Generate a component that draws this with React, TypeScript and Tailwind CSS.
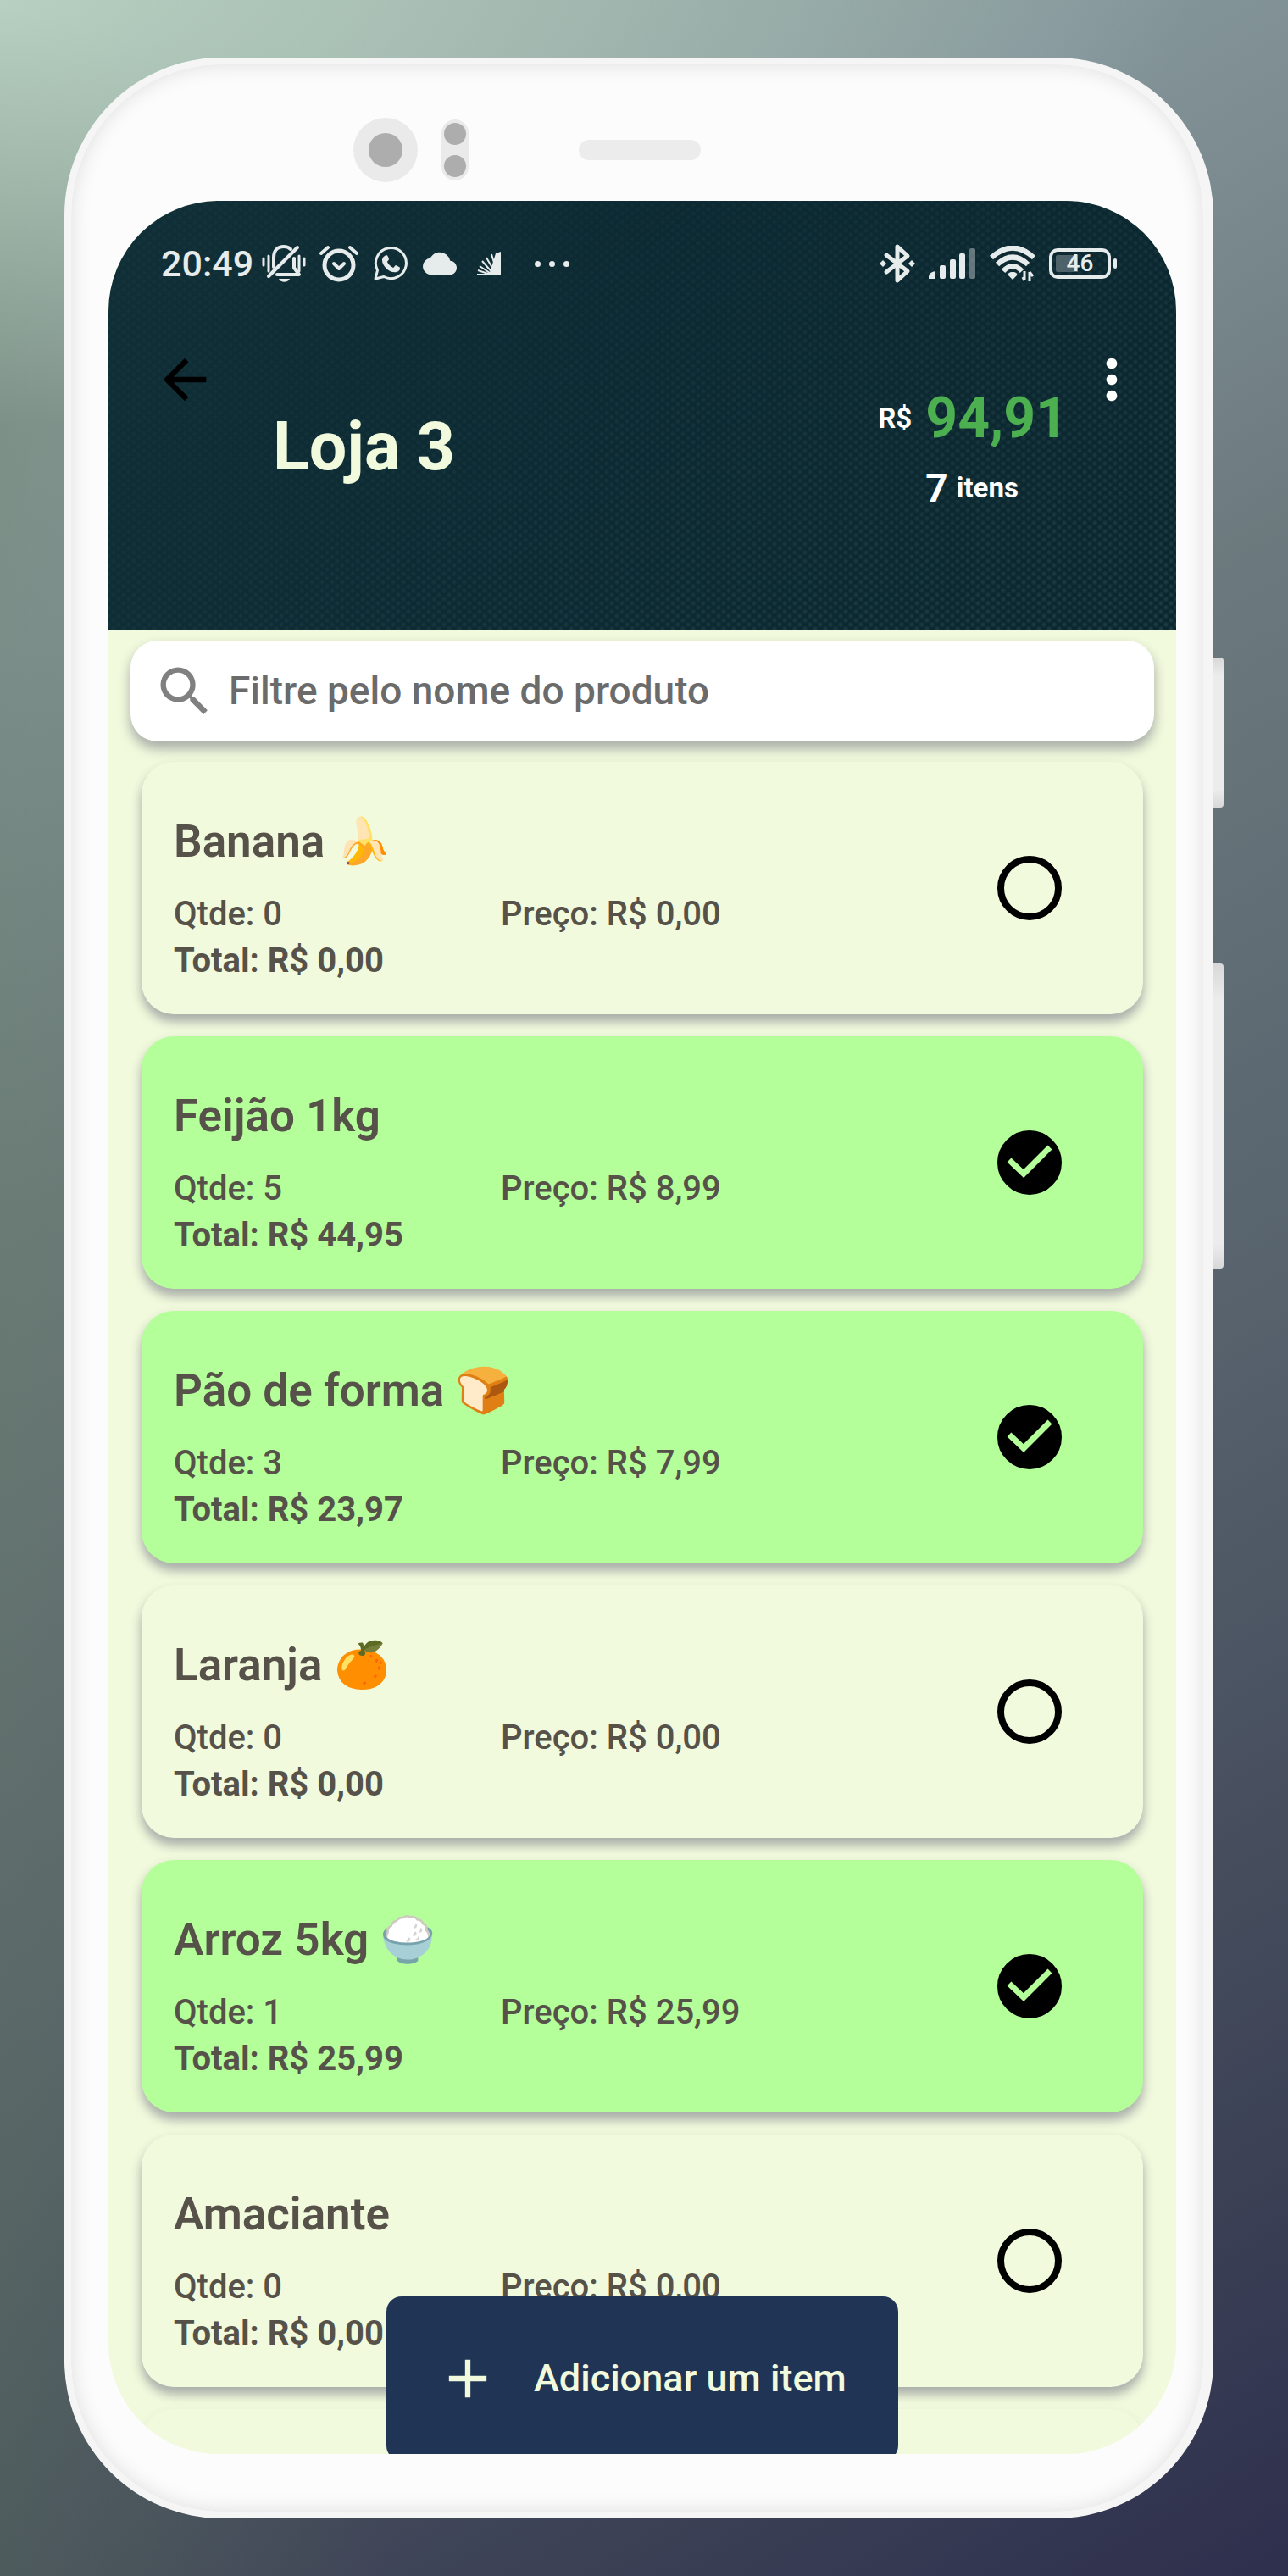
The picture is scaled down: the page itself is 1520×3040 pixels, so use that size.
import React from "react";
import { MdArrowBack, MdMoreVert, MdSearch, MdAdd, MdCloud } from "react-icons/md";

type Item = { name: string; emoji?: string; qty: number; price: string; total: string; done: boolean };

const items: Item[] = [
  { name: "Banana", emoji: "🍌", qty: 0, price: "0,00", total: "0,00", done: false },
  { name: "Feijão 1kg", qty: 5, price: "8,99", total: "44,95", done: true },
  { name: "Pão de forma", emoji: "🍞", qty: 3, price: "7,99", total: "23,97", done: true },
  { name: "Laranja", emoji: "🍊", qty: 0, price: "0,00", total: "0,00", done: false },
  { name: "Arroz 5kg", emoji: "🍚", qty: 1, price: "25,99", total: "25,99", done: true },
  { name: "Amaciante", qty: 0, price: "0,00", total: "0,00", done: false },
];

function BellOff() {
  return (
    <svg viewBox="0 0 52 46" className="w-13 h-[46px]" fill="none" stroke="currentColor" strokeWidth="4" strokeLinecap="round">
      <path d="M2 17v8M8 14v18M44 14v18M50 17v8" strokeWidth="3" />
      <path d="M14 27V16C14 7 19 3 26 3c4 0 6 1 8 3M38 17v11l6 8H18" strokeLinejoin="round" />
      <path d="M42 4L8 38" />
      <path d="M20 41h13c-2 5-11 5-13 0z" fill="currentColor" stroke="none" />
    </svg>
  );
}

function Alarm() {
  return (
    <svg viewBox="0 0 46 44" className="w-[46px] h-11" fill="none" stroke="currentColor" strokeLinecap="round">
      <circle cx="23" cy="24" r="17" strokeWidth="5" />
      <path d="M2 10L10 3M44 10L36 3" strokeWidth="4" />
      <path d="M17 22l6 6 6-6" strokeWidth="4" strokeLinejoin="round" />
    </svg>
  );
}

function Chat() {
  return (
    <svg viewBox="0 0 40 40" className="size-10" fill="none" stroke="currentColor">
      <path d="M2 38l2.500-10A18 18 0 1 1 12 35.500z" strokeWidth="3" strokeLinejoin="round" />
      <path d="M13 11c2-2 3-1 4 1l1 3c0 1-2 2-2 3 1 3 4 5 7 7 1 0 2-3 3-3l4 2c2 1 1 5-3 6-8 2-17-7-17-14 0-2 1-4 3-5z" fill="currentColor" stroke="none" />
    </svg>
  );
}

function Fan() {
  return (
    <svg viewBox="0 0 28 28" className="size-7" fill="none" stroke="currentColor">
      <path d="M28 0v28H14L22 2z" fill="currentColor" stroke="none" />
      <path d="M24 26L17 3M22 26L11 7M20 27L6 11M18 27L3 17M16 27L1 22M14 27H0" strokeWidth="2" />
    </svg>
  );
}

function Bluetooth() {
  return (
    <svg viewBox="0 0 42 48" className="w-[42px] h-12" fill="none" stroke="currentColor">
      <path d="M8 14l25 19-12 11V4l12 11L8 34" strokeWidth="5" strokeLinejoin="round" strokeLinecap="round" />
      <path d="M0 24l4-4 4 4-4 4zM34 24l4-4 4 4-4 4z" fill="currentColor" stroke="none" />
    </svg>
  );
}

function Signal() {
  return (
    <svg viewBox="0 0 56 36" className="w-14 h-9" fill="currentColor">
      <path d="M0 36v-3q1-5 8-6v9z" />
      <rect x="13" y="20" width="7" height="16" rx="2" />
      <rect x="25" y="13" width="7" height="23" rx="2" />
      <rect x="36" y="6" width="7" height="30" rx="2" />
      <rect x="48" y="0" width="7" height="36" rx="2" opacity="0.4" />
    </svg>
  );
}

function Wifi() {
  return (
    <svg viewBox="0 0 54 42" className="w-[54px] h-[42px]" fill="none" stroke="currentColor">
      <path d="M2 14Q27-9 52 14M9 22Q27 5 45 22M16 30Q27 18 38 30" strokeWidth="6" />
      <path d="M27 31c-4 0-6 2-5 4l5 5 5-5c1-2-1-4-5-4z" fill="currentColor" stroke="none" />
      <path d="M41 30v11M39 37l2 4M47 42V31M47 31l4 5" strokeWidth="3" />
    </svg>
  );
}

function Battery() {
  return (
    <div className="flex items-center gap-[3px]">
      <div className="flex h-9 w-[73px] items-center justify-center rounded-[10px] border-4 border-[#e6ebec] bg-[linear-gradient(90deg,#4d6269_46%,transparent_46%)] bg-clip-content p-1 text-[28px] leading-none font-medium">
        46
      </div>
      <span className="h-3 w-1 rounded-full bg-[#e6ebec]" />
    </div>
  );
}

function StatusBar() {
  return (
    <div className="flex items-center pt-12 pr-[70px] pl-[62px] text-[#e6ebec]">
      <span className="text-[43px] leading-13 font-medium">20:49</span>
      <div className="ml-[10px] flex flex-1 items-center">
        <BellOff />
        <span className="ml-4"><Alarm /></span>
        <span className="ml-[18px]"><Chat /></span>
        <MdCloud className="ml-[18px] size-10" />
        <span className="ml-6"><Fan /></span>
        <span className="ml-10 flex gap-[10px]">
          <i className="size-[7px] rounded-full bg-current" />
          <i className="size-[7px] rounded-full bg-current" />
          <i className="size-[7px] rounded-full bg-current" />
        </span>
      </div>
      <div className="flex items-center gap-4">
        <Bluetooth />
        <Signal />
        <Wifi />
        <Battery />
      </div>
    </div>
  );
}

function Header() {
  return (
    <header className="relative shrink-0 bg-[linear-gradient(120deg,#112f37,#0d2a33_45%,#0a252e)] pb-[135px]">
      <div className="absolute inset-0 bg-[radial-gradient(circle,rgba(130,180,180,0.16)_1px,transparent_4px),radial-gradient(circle,rgba(130,180,180,0.16)_1px,transparent_4px)] bg-[length:12px_10px] bg-[position:0_0,6px_5px] [mask-image:linear-gradient(150deg,rgba(0,0,0,0.2)_30%,black)]" />
      <div className="relative">
        <StatusBar />
        <div className="flex items-start pt-[73px] pr-[38px] pl-[52px]">
          <button aria-label="Voltar" className="text-black">
            <MdArrowBack className="size-19" />
          </button>
          <h1 className="mt-[69px] ml-[66px] flex-1 text-[79px] leading-24 font-bold text-[#f1fadd]">Loja 3</h1>
          <div className="mt-11 mr-[14px] grid grid-cols-[auto_auto] items-center gap-x-4 gap-y-[10px] font-bold text-white">
            <span className="text-[33px] leading-10">R$</span>
            <span className="text-[66px] leading-20 text-[#4caf50]">94,91</span>
            <span className="col-start-2 flex items-center gap-[10px] text-[46px] leading-16">
              7 <span className="text-[33px]">itens</span>
            </span>
          </div>
          <button aria-label="Mais opções" className="text-white">
            <MdMoreVert className="size-19" />
          </button>
        </div>
      </div>
    </header>
  );
}

function ItemCard({ item }: { item: Item }) {
  return (
    <li
      className={
        "flex shrink-0 items-center rounded-[38px] pr-24 pl-[38px] shadow-[0_9px_12px_rgba(70,70,100,0.34),0_6px_14px_rgba(70,70,100,0.12)] " +
        (item.done ? "bg-[#b4ff9a]" : "bg-[#f1fadd]")
      }
    >
      <div className="flex-1 pt-[62px] pb-9 text-[40px] leading-[55px] text-[#56524a]">
        <h2 className="mb-[26px] text-[53px] leading-16 font-semibold">
          {item.name} {item.emoji}
        </h2>
        <div className="grid grid-cols-[386px_1fr] font-medium">
          <span>Qtde: {item.qty}</span>
          <span>Preço: R$ {item.price}</span>
        </div>
        <p className="font-bold">Total: R$ {item.total}</p>
      </div>
      <label className="relative block size-19">
        <input
          type="checkbox"
          defaultChecked={item.done}
          aria-label={item.name}
          className="peer block size-19 appearance-none rounded-full border-8 border-black checked:bg-black"
        />
        <svg viewBox="0 0 76 76" className="pointer-events-none absolute inset-0 hidden size-19 peer-checked:block">
          <path d="M14 35l17 16 31-31" fill="none" stroke="#b4ff9a" strokeWidth="7" />
        </svg>
      </label>
    </li>
  );
}

export default function App() {
  return (
    <div className="flex h-screen bg-[radial-gradient(1400px_500px_at_0_0,#b7d0c2,transparent),linear-gradient(90deg,rgba(98,122,92,0.3),transparent_30%),linear-gradient(150deg,#93a59c_0%,#84959a_20%,#6c7a7e_38%,#56616c_62%,#414859_82%,#2e2f4d_100%)] px-19 py-17 font-[Roboto,sans-serif]">
      <div className="flex min-w-0 flex-1 flex-col rounded-[186px] border-8 border-r-12 border-[#f5f5f5] bg-[#fcfcfc] pr-8 pb-17 pl-11 shadow-[inset_0_0_24px_rgba(0,0,0,0.12)]">
        <div className="flex h-[161px] shrink-0 items-center pt-10 pl-[289px]">
          <span className="flex size-[76px] items-center justify-center rounded-full bg-[#eaeaea]">
            <i className="size-10 rounded-full bg-[#adadad]" />
          </span>
          <span className="ml-7 flex h-18 w-8 flex-col items-center justify-between rounded-full bg-[#eaeaea] py-1">
            <i className="size-[26px] rounded-full bg-[#adadad]" />
            <i className="size-[26px] rounded-full bg-[#adadad]" />
          </span>
          <span className="ml-[130px] h-6 w-36 rounded-full bg-[#ececec]" />
        </div>
        <main className="relative flex min-h-0 flex-1 flex-col overflow-hidden rounded-[130px] bg-[#f1fadd]">
          <Header />
          <label className="relative z-10 mx-[26px] mt-[13px] flex h-[119px] shrink-0 items-center gap-[14px] rounded-[32px] bg-white pl-[26px] shadow-[0_9px_14px_rgba(70,70,100,0.34),0_6px_14px_rgba(70,70,100,0.12)]">
            <MdSearch className="size-19 text-[#808080]" />
            <input
              type="text"
              aria-label="Filtrar produtos"
              placeholder="Filtre pelo nome do produto"
              className="min-w-0 flex-1 text-[46px] font-medium outline-none placeholder:text-[#6b6b6b]"
            />
          </label>
          <ul className="flex min-h-0 flex-1 flex-col gap-[26px] overflow-hidden px-[39px] pt-6">
            {items.map((item) => (
              <ItemCard key={item.name} item={item} />
            ))}
            <li aria-hidden="true" className="min-h-20 shrink-0 grow rounded-t-[38px] bg-[#f1fadd] shadow-[0_6px_14px_rgba(70,70,100,0.12)]" />
          </ul>
          <button className="absolute -bottom-2 left-1/2 z-20 flex h-[194px] w-[604px] -translate-x-1/2 items-center gap-10 rounded-[18px] bg-[#203555] pl-[58px] text-[45px] font-medium text-[#f1fadd]">
            <MdAdd className="size-19" />
            Adicionar um item
          </button>
        </main>
      </div>
      <div className="flex w-3 shrink-0 flex-col pt-[708px]">
        <span className="h-[177px] rounded-r-sm bg-[linear-gradient(#d8d8d8,#ececec_12%,#ececec_88%,#d8d8d8)]" />
        <span className="mt-46 h-[360px] rounded-r-sm bg-[linear-gradient(#d8d8d8,#ececec_12%,#ececec_92%,#d8d8d8)]" />
      </div>
    </div>
  );
}
